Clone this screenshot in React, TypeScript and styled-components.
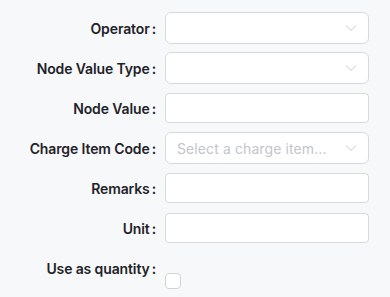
import React from "react";
import styled, { createGlobalStyle } from "styled-components";

const GlobalStyle = createGlobalStyle`
  html, body {
    margin: 0;
    padding: 0;
    background: #f7f8fa;
  }
  body {
    font-family: Inter, "Noto Sans", "Liberation Sans", sans-serif;
    -webkit-font-smoothing: antialiased;
  }
`;

const Form = styled.div`
  display: flex;
  flex-direction: column;
  gap: 8px;
  padding: 12px 21px 12px 0;
  width: 390px;
  box-sizing: border-box;
`;

const Row = styled.div<{ $top?: boolean }>`
  display: grid;
  grid-template-columns: 156px 1fr;
  column-gap: 9px;
  align-items: ${(p) => (p.$top ? "start" : "center")};
  min-height: 32px;
`;

const Label = styled.label`
  display: flex;
  justify-content: flex-end;
  align-items: center;
  height: 32px;
  font-size: 14px;
  font-weight: 600;
  letter-spacing: -0.12px;
  color: #1f2329;
  white-space: nowrap;

  &::after {
    content: ":";
    margin-left: 2px;
  }
`;

const Select = styled.div`
  display: flex;
  align-items: center;
  justify-content: space-between;
  height: 32px;
  box-sizing: border-box;
  padding: 0 11px;
  background: #fff;
  border: 1px solid #d9d9d9;
  border-radius: 6px;
  font-size: 14px;
  letter-spacing: 0.1px;
  color: #c2c5cc;
`;

const Input = styled.input`
  height: 30px;
  box-sizing: border-box;
  width: 100%;
  padding: 0 11px;
  background: #fff;
  border: 1px solid #d9d9d9;
  border-radius: 4px;
  font-family: inherit;
  font-size: 14px;
  outline: none;
`;

const CheckBox = styled.span`
  display: block;
  width: 16px;
  height: 16px;
  box-sizing: border-box;
  margin-top: 21px;
  background: #fff;
  border: 1px solid #d0d3d9;
  border-radius: 4px;
`;

const Chevron = () => (
  <svg width="12" height="8" viewBox="0 0 12 8" fill="none">
    <path d="M1 1.5L6 6.5L11 1.5" stroke="#c4c7cc" strokeWidth="1" />
  </svg>
);

export default function App() {
  return (
    <>
      <GlobalStyle />
      <Form>
        <Row>
          <Label>Operator</Label>
          <Select>
            <span />
            <Chevron />
          </Select>
        </Row>
        <Row>
          <Label>Node Value Type</Label>
          <Select>
            <span />
            <Chevron />
          </Select>
        </Row>
        <Row>
          <Label>Node Value</Label>
          <Input />
        </Row>
        <Row>
          <Label>Charge Item Code</Label>
          <Select>
            <span>Select a charge item...</span>
            <Chevron />
          </Select>
        </Row>
        <Row>
          <Label>Remarks</Label>
          <Input />
        </Row>
        <Row>
          <Label>Unit</Label>
          <Input />
        </Row>
        <Row $top>
          <Label>Use as quantity</Label>
          <CheckBox />
        </Row>
      </Form>
    </>
  );
}
